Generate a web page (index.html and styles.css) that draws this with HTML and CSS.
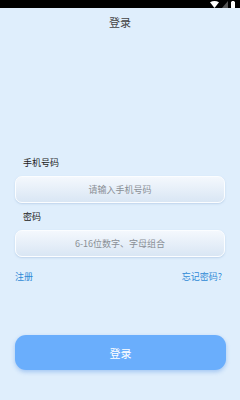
FILE: index.html
```html
<!DOCTYPE html>
<html lang="zh">
<head>
<meta charset="utf-8">
<link rel="stylesheet" href="styles.css">
</head>
<body>
<div class="screen">
  <div class="statusbar">
    <svg class="sb-icon" width="9" height="7" viewBox="0 0 9 7"><path d="M0 1.2 Q4.5 -1.2 9 1.2 L4.5 7 Z" fill="#fff"/></svg>
    <svg class="sb-icon" width="6" height="7" viewBox="0 0 6 7"><path d="M0 7 L6 0 L6 7 Z" fill="#555"/></svg>
    <svg class="sb-icon" width="4" height="7" viewBox="0 0 4 7"><rect x="0" y="0.5" width="4" height="6.5" rx="0.5" fill="#fff"/><rect x="1" y="0" width="2" height="1" fill="#fff"/></svg>
  </div>
  <div class="title">登录</div>
  <div class="form">
    <div class="label">手机号码</div>
    <div class="input">请输入手机号码</div>
    <div class="label label2">密码</div>
    <div class="input">6-16位数字、字母组合</div>
    <div class="links">
      <span class="link">注册</span>
      <span class="link">忘记密码?</span>
    </div>
  </div>
  <div class="btn">登录</div>
</div>
</body>
</html>
```

FILE: styles.css
```css
html, body {
  margin: 0;
  padding: 0;
}
body {
  width: 240px;
  height: 400px;
  overflow: hidden;
  background: #dfeefc;
  font-family: "Noto Sans CJK SC", "Noto Sans", sans-serif;
}
.screen {
  display: flex;
  flex-direction: column;
  height: 400px;
}
.statusbar {
  height: 8px;
  background: #000;
  display: flex;
  justify-content: flex-end;
  align-items: center;
  gap: 3px;
  padding-right: 5px;
}
.sb-icon {
  display: block;
}
.title {
  margin-top: 7px;
  text-align: center;
  font-size: 11px;
  line-height: 14px;
  color: #444;
}
.form {
  margin-top: 128px;
  padding: 0 15px;
  display: flex;
  flex-direction: column;
}
.label {
  padding-left: 8px;
  font-size: 9px;
  line-height: 12px;
  color: #222;
}
.label2 {
  margin-top: 8px;
}
.input {
  margin-top: 7px;
  height: 25px;
  border: 1px solid #fbfdff;
  border-radius: 7px;
  background: linear-gradient(#f4f8fd, #d9e6f4);
  box-shadow: 0 1px 2px rgba(150, 180, 215, 0.45);
  display: flex;
  align-items: center;
  justify-content: center;
  font-size: 9px;
  color: #8a8f96;
}
.links {
  margin-top: 14px;
  display: flex;
  justify-content: space-between;
  padding-right: 3px;
  font-size: 9px;
  line-height: 12px;
}
.link {
  color: #2f8ad6;
}
.btn {
  margin: 52px 14px 0 15px;
  height: 35px;
  border-radius: 11px;
  background: #6aaefc;
  box-shadow: 0 2px 4px rgba(90, 150, 230, 0.45);
  color: #fff;
  font-size: 11px;
  display: flex;
  align-items: center;
  justify-content: center;
}
```
